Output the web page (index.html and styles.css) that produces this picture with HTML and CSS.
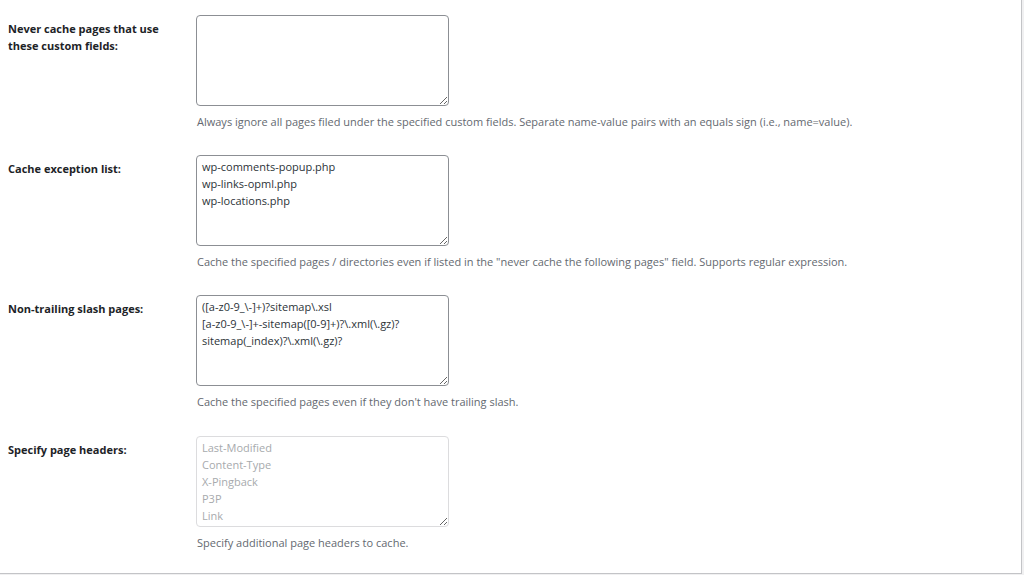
FILE: index.html
```html
<!DOCTYPE html>
<html lang="en">

<head>
    <meta charset="UTF-8">
    <meta name="viewport" content="width=device-width, initial-scale=1.0">
    <title>Page Cache - Advanced</title>
    <link rel="stylesheet" href="styles.css">
</head>

<body>
    <div class="panel">
        <form class="form-table">
            <!-- custom fields -->
            <div class="row">
                <label class="row-label" for="reject-custom">Never cache pages that use these custom fields:</label>
                <div class="row-field">
                    <textarea id="reject-custom" class="field-box"></textarea>
                    <p class="description">Always ignore all pages filed under the specified custom fields. Separate name-value pairs with an equals sign (i.e., name=value).</p>
                </div>
            </div>
            <!-- exceptions -->
            <div class="row">
                <label class="row-label" for="accept-files">Cache exception list:</label>
                <div class="row-field">
                    <textarea id="accept-files" class="field-box">wp-comments-popup.php
wp-links-opml.php
wp-locations.php</textarea>
                    <p class="description">Cache the specified pages / directories even if listed in the "never cache the following pages" field. Supports regular expression.</p>
                </div>
            </div>
            <!-- slash pages -->
            <div class="row">
                <label class="row-label" for="accept-qs">Non-trailing slash pages:</label>
                <div class="row-field">
                    <textarea id="accept-qs" class="field-box">([a-z0-9_\-]+)?sitemap\.xsl
[a-z0-9_\-]+-sitemap([0-9]+)?\.xml(\.gz)?
sitemap(_index)?\.xml(\.gz)?</textarea>
                    <p class="description">Cache the specified pages even if they don't have trailing slash.</p>
                </div>
            </div>
            <!-- headers -->
            <div class="row row-last">
                <label class="row-label" for="cache-headers">Specify page headers:</label>
                <div class="row-field">
                    <textarea id="cache-headers" class="field-box" disabled>Last-Modified
Content-Type
X-Pingback
P3P
Link</textarea>
                    <p class="description">Specify additional page headers to cache.</p>
                </div>
            </div>
        </form>
    </div>
</body>

</html>
```

FILE: styles.css
```css
/* page */
body {
    margin: 0;
    background: #f0f0f1;
    font-family: "Open Sans", "Noto Sans", sans-serif;
    font-size: 11px;
    color: #1d2327;
}

.panel {
    width: 1021px;
    height: 573px;
    background: #fff;
    border-right: 1px solid #c3c4c7;
    border-bottom: 1px solid #c3c4c7;
    overflow: hidden;
}

/* settings rows */
.form-table {
    margin: 0;
}

.row {
    display: grid;
    grid-template-columns: 196px 1fr;
    height: 140px;
    box-sizing: border-box;
}

.row-last {
    padding-top: 1px;
}

.row-label {
    padding: 20px 20px 0 8px;
    font-weight: 700;
    line-height: 17px;
}

.row-field {
    padding-top: 15px;
}

.field-box {
    display: block;
    box-sizing: border-box;
    width: 253px;
    height: 91px;
    margin: 0;
    padding: 2px 5px;
    border: 1px solid #8c8f94;
    border-radius: 4px;
    background: #fff;
    color: #2c3338;
    font-family: inherit;
    font-size: 11px;
    line-height: 17px;
}

.field-box:disabled {
    border-color: #dcdcde;
    color: #a7aaad;
    background: #fff;
}

.description {
    margin: 7px 0 0;
    padding-left: 1px;
    color: #646970;
    line-height: 17px;
}
```
